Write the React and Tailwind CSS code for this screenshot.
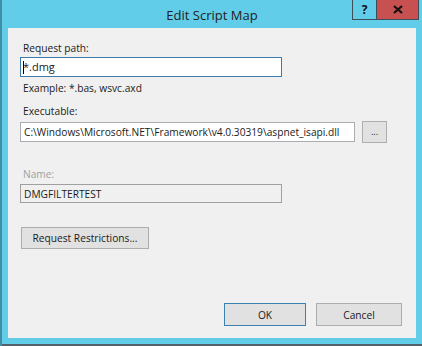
export default function App() {
  const font = { fontFamily: '"Open Sans", "Noto Sans", sans-serif' };
  return (
    <div
      className="w-[422px] h-[346px] bg-[#62cde9] border-l-2 border-[#3f8ea8] flex flex-col text-[10.2px] text-[#1a1a1a] overflow-hidden"
      style={font}
    >
      {/* title bar */}
      <div className="h-[28px] grid grid-cols-[1fr_auto_1fr] shrink-0">
        <div />
        <div className="text-[13px] leading-[28px] text-[#222] pt-[1px]">Edit Script Map</div>
        <div className="flex justify-end items-start pr-[3px]">
          <div className="w-[25px] h-[20px] border border-[#3b4f59] border-t-0 flex items-center justify-center text-[12px] font-bold text-[#111]">?</div>
          <div className="w-[42px] h-[20px] bg-[#c75050] border border-[#3b4f59] border-t-0 border-l-0 flex items-center justify-center">
            <svg width="10" height="9" viewBox="0 0 10 9">
              <path d="M1 1 L9 8 M9 1 L1 8" stroke="#111" strokeWidth="2.2" />
            </svg>
          </div>
        </div>
      </div>

      {/* content */}
      <div className="ml-[6px] mr-[6px] h-[310px] bg-[#f0f0f0] flex flex-col pl-[12px] pr-[14px] pt-[12px] pb-[12px] shrink-0">
        <div className="pl-[3px] leading-[16px]">Request path:</div>
        <div className="mt-[1px] w-[262px] h-[20px] bg-white border border-[#3d7bad] flex items-center pl-[2px]">
          <span className="inline-block w-px h-[13px] bg-black" />
          <span className="-ml-[1px] leading-[16px] text-[11px]">*.dmg</span>
        </div>
        <div className="pl-[3px] mt-[3px] leading-[16px]">Example: *.bas, wsvc.axd</div>
        <div className="pl-[3px] mt-[7px] leading-[16px]">Executable:</div>
        <div className="mt-[2px] flex items-center gap-[7px]">
          <div className="w-[335px] h-[20px] bg-white border border-[#abadb3] flex items-center pl-[3px] leading-[16px] whitespace-nowrap overflow-hidden">
            C:\Windows\Microsoft.NET\Framework\v4.0.30319\aspnet_isapi.dll
          </div>
          <div className="w-[25px] h-[22px] bg-[#e1e1e1] border border-[#adadad] flex items-center justify-center text-[9px] leading-none pb-[2px]">...</div>
        </div>
        <div className="pl-[3px] mt-[23px] leading-[16px] text-[#a0a0a0]">Name:</div>
        <div className="mt-[2px] w-[262px] h-[19px] bg-[#f0f0f0] border border-[#a0a0a0] flex items-center pl-[3px] leading-[16px]">DMGFILTERTEST</div>
        <div className="mt-[24px] ml-[1px] w-[128px] h-[22px] bg-[#e1e1e1] border border-[#adadad] flex items-center justify-center leading-[16px]">Request Restrictions...</div>
        <div className="flex-1" />
        <div className="flex justify-end gap-[10px]">
          <div className="w-[82px] h-[23px] bg-[#e1e1e1] border border-[#3c7fb1] flex items-center justify-center leading-[16px]">OK</div>
          <div className="w-[86px] h-[23px] bg-[#e1e1e1] border border-[#adadad] flex items-center justify-center leading-[16px]">Cancel</div>
        </div>
      </div>
      <div className="flex-1" />
      <div className="h-[2px] bg-[#55616a] shrink-0" />
    </div>
  );
}
